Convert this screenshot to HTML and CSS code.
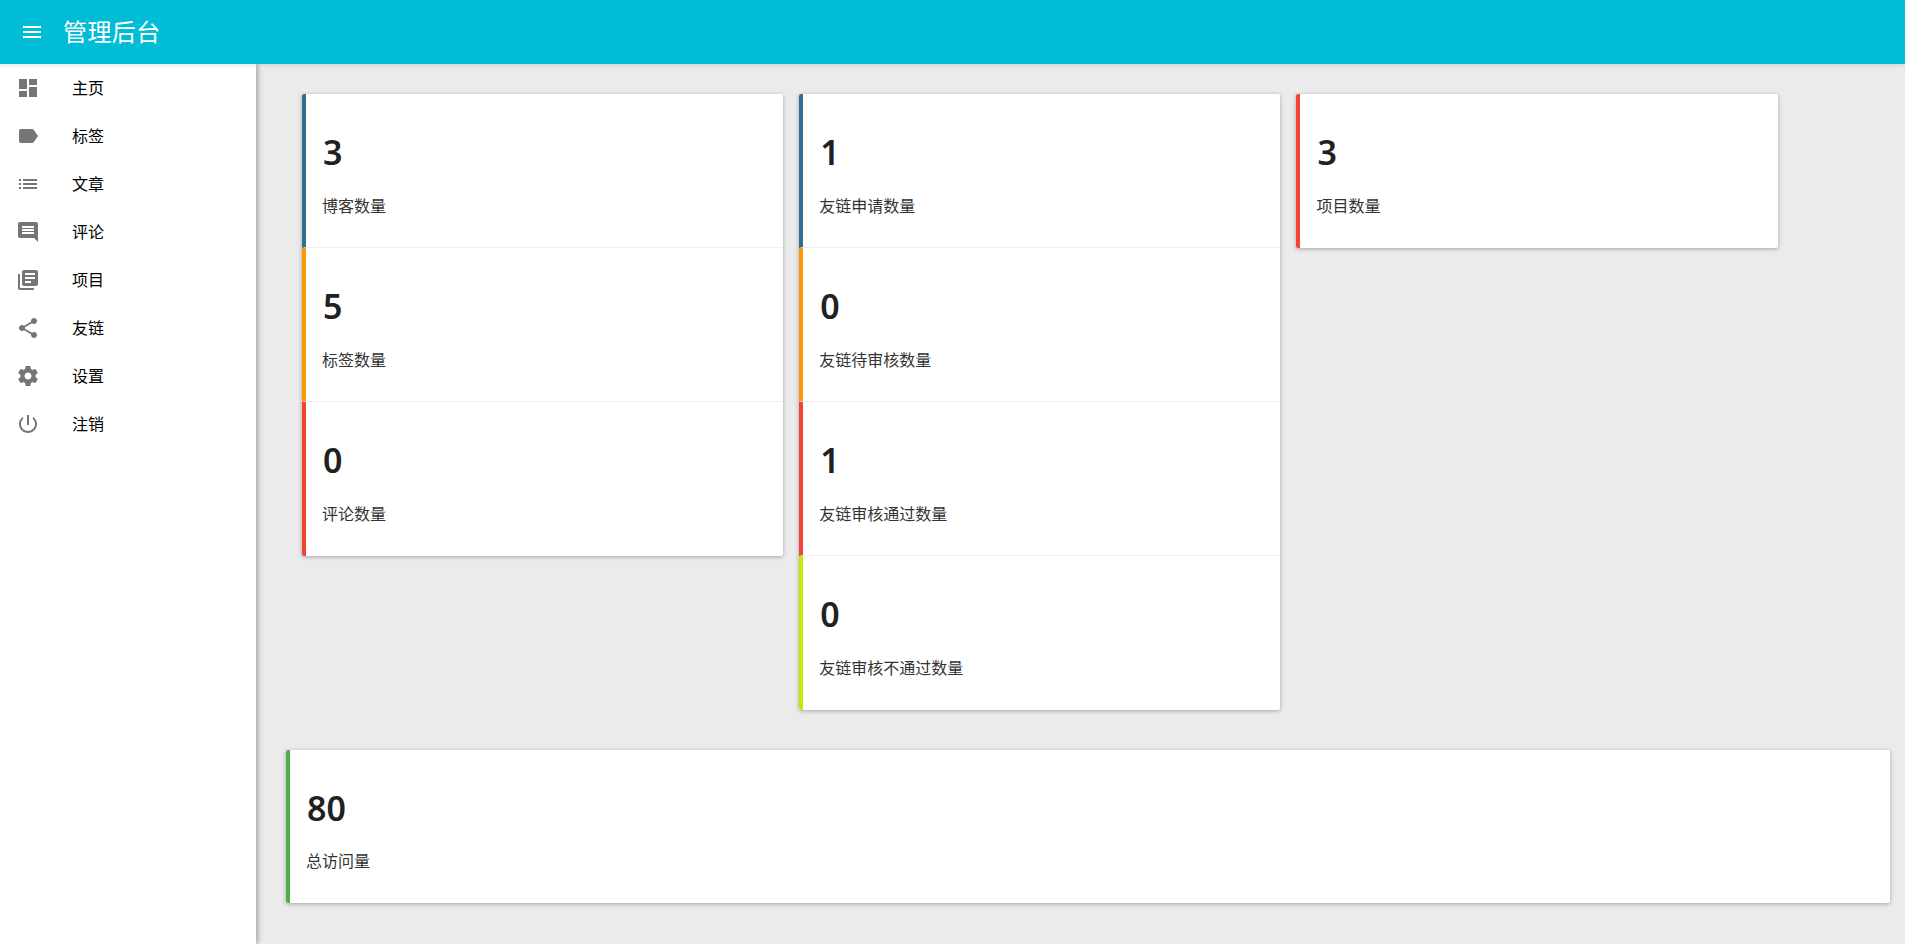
FILE: index.html
```html
<!DOCTYPE html>
<html lang="zh-CN">
<head>
<meta charset="utf-8">
<title>管理后台</title>
<link rel="stylesheet" href="styles.css">
</head>
<body>
<header class="topbar">
  <button class="menu-btn" type="button" aria-label="菜单">
    <svg class="icon" viewBox="0 0 24 24"><path d="M3 18h18v-2H3v2zm0-5h18v-2H3v2zm0-7v2h18V6H3z"/></svg>
  </button>
  <h1 class="title">管理后台</h1>
</header>
<div class="body">
  <nav class="sidebar">
    <a class="nav-item"><svg class="icon" viewBox="0 0 24 24"><path d="M3 13h8V3H3v10zm0 8h8v-6H3v6zm10 0h8V11h-8v10zm0-18v6h8V3h-8z"/></svg><span>主页</span></a>
    <a class="nav-item"><svg class="icon" viewBox="0 0 24 24"><path d="M17.63 5.84C17.27 5.33 16.67 5 16 5L5 5.01C3.9 5.01 3 5.9 3 7v10c0 1.1.9 1.99 2 1.99L16 19c.67 0 1.27-.33 1.63-.84L22 12l-4.37-6.16z"/></svg><span>标签</span></a>
    <a class="nav-item"><svg class="icon" viewBox="0 0 24 24"><path d="M3 13h2v-2H3v2zm0 4h2v-2H3v2zm0-8h2V7H3v2zm4 4h14v-2H7v2zm0 4h14v-2H7v2zM7 7v2h14V7H7z"/></svg><span>文章</span></a>
    <a class="nav-item"><svg class="icon" viewBox="0 0 24 24"><path d="M21.99 4c0-1.1-.89-2-1.99-2H4c-1.1 0-2 .9-2 2v12c0 1.1.9 2 2 2h14l4 4-.01-18zM18 14H6v-2h12v2zm0-3H6V9h12v2zm0-3H6V6h12v2z"/></svg><span>评论</span></a>
    <a class="nav-item"><svg class="icon" viewBox="0 0 24 24"><path d="M4 6H2v14c0 1.1.9 2 2 2h14v-2H4V6zm16-4H8c-1.1 0-2 .9-2 2v12c0 1.1.9 2 2 2h12c1.1 0 2-.9 2-2V4c0-1.1-.9-2-2-2zm-1 9H9V9h10v2zm-4 4H9v-2h6v2zm4-8H9V5h10v2z"/></svg><span>项目</span></a>
    <a class="nav-item"><svg class="icon" viewBox="0 0 24 24"><path d="M18 16.08c-.76 0-1.44.3-1.96.77L8.91 12.7c.05-.23.09-.46.09-.7s-.04-.47-.09-.7l7.05-4.11c.54.5 1.25.81 2.04.81 1.66 0 3-1.34 3-3s-1.34-3-3-3-3 1.34-3 3c0 .24.04.47.09.7L8.04 9.81C7.5 9.31 6.79 9 6 9c-1.66 0-3 1.34-3 3s1.34 3 3 3c.79 0 1.5-.31 2.04-.81l7.12 4.16c-.05.21-.08.43-.08.65 0 1.61 1.31 2.92 2.92 2.92 1.61 0 2.92-1.31 2.92-2.92s-1.31-2.92-2.92-2.92z"/></svg><span>友链</span></a>
    <a class="nav-item"><svg class="icon" viewBox="0 0 24 24"><path d="M19.43 12.98c.04-.32.07-.64.07-.98s-.03-.66-.07-.98l2.11-1.65c.19-.15.24-.42.12-.64l-2-3.46c-.12-.22-.39-.3-.61-.22l-2.49 1c-.52-.4-1.08-.73-1.69-.98l-.38-2.65C14.46 2.18 14.25 2 14 2h-4c-.25 0-.46.18-.49.42l-.38 2.65c-.61.25-1.17.59-1.69.98l-2.49-1c-.23-.09-.49 0-.61.22l-2 3.46c-.13.22-.07.49.12.64l2.11 1.65c-.04.32-.07.65-.07.98s.03.66.07.98l-2.11 1.65c-.19.15-.24.42-.12.64l2 3.46c.12.22.39.3.61.22l2.49-1c.52.4 1.08.73 1.69.98l.38 2.65c.03.24.24.42.49.42h4c.25 0 .46-.18.49-.42l.38-2.65c.61-.25 1.17-.59 1.69-.98l2.49 1c.23.09.49 0 .61-.22l2-3.46c.12-.22.07-.49-.12-.64l-2.11-1.65zM12 15.5c-1.93 0-3.5-1.57-3.5-3.5s1.57-3.5 3.5-3.5 3.5 1.57 3.5 3.5-1.57 3.5-3.5 3.5z"/></svg><span>设置</span></a>
    <a class="nav-item"><svg class="icon" viewBox="0 0 24 24"><path d="M13 3h-2v10h2V3zm4.83 2.17l-1.42 1.42C17.99 7.86 19 9.81 19 12c0 3.87-3.13 7-7 7s-7-3.13-7-7c0-2.19 1.01-4.14 2.58-5.42L6.17 5.17C4.23 6.82 3 9.26 3 12c0 4.97 4.03 9 9 9s9-4.03 9-9c0-2.74-1.23-5.18-3.17-6.83z"/></svg><span>注销</span></a>
  </nav>
  <main class="main">
    <section class="columns">
      <div class="group">
        <div class="stat blue"><div class="num">3</div><div class="label">博客数量</div></div>
        <div class="stat orange"><div class="num">5</div><div class="label">标签数量</div></div>
        <div class="stat red"><div class="num">0</div><div class="label">评论数量</div></div>
      </div>
      <div class="group">
        <div class="stat blue"><div class="num">1</div><div class="label">友链申请数量</div></div>
        <div class="stat orange"><div class="num">0</div><div class="label">友链待审核数量</div></div>
        <div class="stat red"><div class="num">1</div><div class="label">友链审核通过数量</div></div>
        <div class="stat lime"><div class="num">0</div><div class="label">友链审核不通过数量</div></div>
      </div>
      <div class="group">
        <div class="stat red"><div class="num">3</div><div class="label">项目数量</div></div>
      </div>
    </section>
    <section class="group wide">
      <div class="stat green"><div class="num">80</div><div class="label">总访问量</div></div>
    </section>
  </main>
</div>
</body>
</html>
```

FILE: styles.css
```css
* {
  box-sizing: border-box;
}

html,
body {
  height: 100%;
}

body {
  margin: 0;
  display: flex;
  flex-direction: column;
  overflow: hidden;
  background: #ebebeb;
  color: #212121;
  font-family: "Noto Sans", "Noto Sans CJK SC", sans-serif;
}

.topbar {
  position: relative;
  z-index: 2;
  flex: 0 0 64px;
  display: flex;
  align-items: center;
  padding-left: 20px;
  background: #00bcd4;
  color: #fff;
  box-shadow: 0 1px 4px rgba(0, 0, 0, 0.12);
}

.menu-btn {
  display: flex;
  width: 24px;
  height: 24px;
  margin-right: 19px;
  padding: 0;
  border: 0;
  background: none;
  color: inherit;
}

.icon {
  flex: none;
  display: block;
  width: 24px;
  height: 24px;
  fill: currentColor;
}

.title {
  margin: 0;
  font-size: 24px;
  font-weight: 400;
  line-height: 32px;
  letter-spacing: 0.4px;
}

.body {
  flex: 1;
  display: flex;
  min-height: 0;
}

.sidebar {
  position: relative;
  z-index: 1;
  flex: 0 0 256px;
  background: #fff;
  box-shadow: 2px 0 5px rgba(0, 0, 0, 0.3);
}

.nav-item {
  display: flex;
  align-items: center;
  height: 48px;
  padding-left: 16px;
  color: #000;
  font-size: 16px;
}

.nav-item span {
  margin-top: -2px;
}

.nav-item .icon {
  margin-right: 32px;
  color: #757575;
}

.main {
  flex: 1;
  min-width: 0;
  padding: 30px 15px 0 30px;
}

.columns {
  display: flex;
  align-items: flex-start;
}

.columns .group {
  flex: 0 0 30%;
  margin-left: 16px;
}

.group {
  overflow: hidden;
  border-radius: 2px;
  background: #fff;
  box-shadow: 0 1px 4px rgba(0, 0, 0, 0.3);
}

.wide {
  margin-top: 40px;
}

.stat {
  height: 154px;
  padding: 38px 16px 0;
  border-left: 4px solid;
  border-bottom: 1px solid #eee;
}

.stat:last-child {
  border-bottom: 0;
}

.wide .stat {
  height: 153px;
}

.wide .label {
  margin-top: 21px;
}

.num {
  padding-left: 1px;
  font-size: 34px;
  font-weight: 600;
  line-height: 40px;
  color: #212121;
}

.label {
  margin-top: 22px;
  font-size: 16px;
  line-height: 24px;
  color: #333;
}

.blue { border-left-color: #2f6f8f; }
.orange { border-left-color: #ff9800; }
.red { border-left-color: #f44336; }
.lime { border-left-color: #c6e900; }
.green { border-left-color: #4caf50; }
```
